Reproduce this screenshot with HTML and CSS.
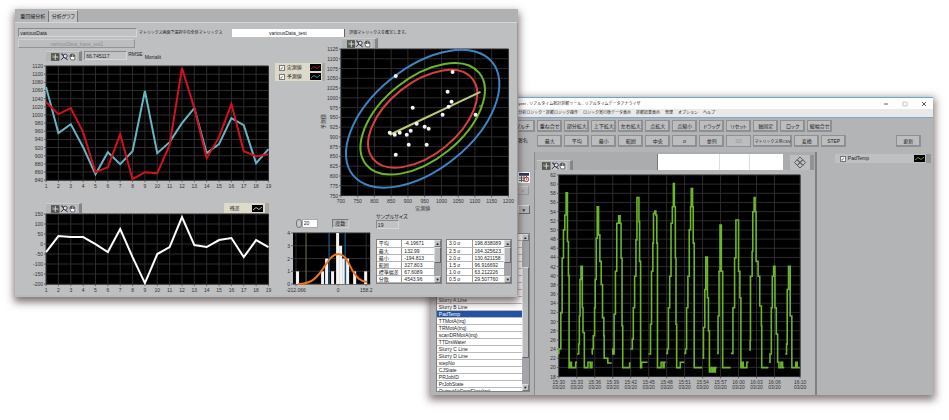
FILE: index.html
```html
<!DOCTYPE html>
<html lang="ja">
<head>
<meta charset="utf-8">
<title>リアルタイム統計診断ツール</title>
<link rel="stylesheet" href="styles.css">
</head>
<body>
<svg class="defs" aria-hidden="true">
  <symbol id="i-cross" viewBox="0 0 9 8"><rect width="9" height="8" fill="#555"/><path d="M4.500 1v6M1.500 4h6" stroke="#d5dccf" fill="none"/><rect x="1" y="2" width="2" height="2" fill="#5a9a4a"/></symbol>
  <symbol id="i-zoom" viewBox="0 0 9 8"><rect width="9" height="8" fill="#c4c4c6"/><path d="M1 7l3-3M1 1h2v2M5 5l3 2" stroke="#222" fill="none"/><circle cx="5.500" cy="3" r="2" fill="#dfe3f5" stroke="#33364f"/></symbol>
  <symbol id="i-hand" viewBox="0 0 9 8"><rect width="9" height="8" fill="#c4c4c6"/><path d="M2 7L1 4V2h1v2V1h1v3V1h2v3V2h1v3L6 7z" fill="#fff" stroke="#333" stroke-width=".7"/></symbol>
  <symbol id="i-wave" viewBox="0 0 11 7"><rect width="11" height="7" fill="#000"/><path d="M1 5L4 2.500 7 4.500 10 2" fill="none" stroke="currentColor" stroke-width=".8"/></symbol>
</svg>
<main class="desktop">
  <section class="window analyzer">
    <header class="titlebar">
      <span>yzer - リアルタイム統計診断ツール - リアルタイムデータアナライザ</span>
      <div class="caption">
        <button aria-label="最小化"><svg viewBox="0 0 6 6"><path d="M1 3h4"/></svg></button>
        <button aria-label="最大化" class="dim"><svg viewBox="0 0 6 6"><path d="M1 1h4v4H1z"/></svg></button>
        <button aria-label="閉じる"><svg viewBox="0 0 6 6"><path d="M1 1l4 4M5 1L1 5"/></svg></button>
      </div>
    </header>
    <nav class="menubar">
      <a href="#">分析ロジック・診断ロジック操作</a><a href="#">ロジック実行後データ表示</a><a href="#">診断結果表示</a><a href="#">管理</a><a href="#">オプション</a><a href="#">ヘルプ</a>
    </nav>
    <div class="tools">
      <div class="tool-row"><button>マルチ</button><button>重ね合せ</button><button>部分拡大</button><button>上下拡大</button><button>左右拡大</button><button>点拡大</button><button>点縮小</button><button>ドラッグ</button><button>リセット</button><button>軸固定</button><button>ロック</button><button>縦幅合せ</button></div>
      <div class="tool-row"><span class="tool-label">署名</span><button>最大</button><button>平均</button><button>最小</button><button>範囲</button><button>中央</button><button>σ</button><button>並列</button><button disabled>SD</button><button class="wide">マトリックス用CSV</button><button>変換</button><button>STEP</button><button class="update">更新</button></div>
    </div>
    <div class="analyzer-body">
      <aside class="side">
        <button class="cal" aria-label="期間"><svg viewBox="0 0 12 11"><path fill="#fff" d="M0 0h12v11H0z"/><path fill="#27306b" d="M1 1h10v2H1z"/><path d="M1 3.500h10M1 6h10M1 8.500h6M3.500 2v8M6 2v8M8.500 2v4" stroke="#444" stroke-width=".8"/><circle cx="8.500" cy="7.500" r="2.200" fill="#fff" stroke="#b33"/><path d="M8.500 6v2h1" stroke="#b33" stroke-width=".7" fill="none"/></svg></button>
        <button class="drop" disabled aria-label="選択肢 1">▼</button>
        <button class="drop lower" aria-label="選択肢 2">▼</button>
        <div class="listbox">
          <ul>
            <li></li><li></li><li></li><li></li><li></li><li></li><li></li><li></li><li></li>
            <li>Slurry A Line</li><li>Slurry B Line</li><li class="selected">PadTemp</li><li>TTMotA(trq)</li><li>TRMotA(trq)</li><li>scanDRMotA(trq)</li><li>TTDrsWater</li><li>Slurry C Line</li><li>Slurry D Line</li><li>stepNo</li><li>CJState</li><li>PRJobID</li><li>PrJobState</li><li>OutputAirDoorFlow(trq)</li>
          </ul>
          <div class="scroll"><b>▲</b><i class="long"></i><b>▼</b></div>
        </div>
      </aside>
      <div class="monitor">
        <div class="monitor-head">
          <div class="palette"><button aria-label="カーソル"><svg><use href="#i-cross"/></svg></button><button aria-label="ズーム"><svg><use href="#i-zoom"/></svg></button><button aria-label="パン"><svg><use href="#i-hand"/></svg></button></div>
          <div class="overview"><span></span><span></span><span></span></div>
          <button class="pad" aria-label="移動"><svg viewBox="0 0 14 14"><path d="M7 1l3 3-3 3-3-3zM7 7l3 3-3 3-3-3zM4 4l3 3-3 3-3-3zM10 4l3 3-3 3-3-3z"/></svg></button>
        </div>
        <svg id="temp" class="chart" viewBox="535 168 282 226" role="img" aria-label="PadTemp"></svg>
      </div>
      <div class="monitor-side">
        <label class="legend-bar"><input type="checkbox" checked><span>PadTemp</span><svg class="wave green"><use href="#i-wave"/></svg></label>
      </div>
    </div>
  </section>

  <section class="window report">
    <div class="tabs" role="tablist"><button role="tab">重回帰分析</button><button role="tab" class="active" aria-selected="true">分析グラフ</button></div>
    <div class="page">
      <div class="names">
        <input id="all" class="sunk" value="variousData"><label for="all">マトリックス画面で選択中の全体マトリックス</label>
        <input id="eval" class="white" value="variousData_test"><label for="eval">評価マトリックスを確定します。</label>
      </div>
      <div class="panels">
        <div class="p-main">
          <button class="base" disabled>variousData_base_set2</button>
          <div class="metrics">
            <div class="palette"><button aria-label="カーソル"><svg><use href="#i-cross"/></svg></button><button aria-label="ズーム"><svg><use href="#i-zoom"/></svg></button><button aria-label="パン"><svg><use href="#i-hand"/></svg></button></div>
            <input id="rmse" class="sunk" value="66.745117"><label for="rmse">RMSE</label><span class="unit">Mortalit</span>
          </div>
          <div class="with-legend">
            <svg id="fit" class="chart" viewBox="18 62 254 129" role="img" aria-label="実測値と予測値"></svg>
            <div class="legend">
              <label><input type="checkbox" checked><span>実測値</span><svg class="wave red"><use href="#i-wave"/></svg></label>
              <label><input type="checkbox" checked><span>予測値</span><svg class="wave teal"><use href="#i-wave"/></svg></label>
            </div>
          </div>
        </div>
        <div class="p-scatter">
          <div class="palette"><button aria-label="カーソル"><svg><use href="#i-cross"/></svg></button><button aria-label="ズーム"><svg><use href="#i-zoom"/></svg></button><button aria-label="パン"><svg><use href="#i-hand"/></svg></button></div>
          <svg id="scatter" class="chart" viewBox="318 48 194 164" role="img" aria-label="散布図"></svg>
        </div>
        <div class="p-resid">
          <div class="resid-head">
            <div class="palette"><button aria-label="カーソル"><svg><use href="#i-cross"/></svg></button><button aria-label="ズーム"><svg><use href="#i-zoom"/></svg></button><button aria-label="パン"><svg><use href="#i-hand"/></svg></button></div>
            <div class="legend-one"><span>残差</span><svg class="wave"><use href="#i-wave"/></svg></div>
          </div>
          <svg id="resid" class="chart" viewBox="18 213 267 82" role="img" aria-label="残差"></svg>
        </div>
        <div class="p-hist">
          <div class="hist-head"><span class="spin"></span><input class="num" value="20" aria-label="区間数"><button class="freq">度数</button></div>
          <svg id="hist" class="chart" viewBox="285 231 87 64" role="img" aria-label="度数分布"></svg>
        </div>
        <div class="p-stats">
          <label for="size">サンプルサイズ</label>
          <input id="size" class="sunk" value="19">
          <div class="tables">
            <div class="grid-box"><table><tr><th>平均</th><td>-4.19671</td></tr><tr><th>最大</th><td>132.99</td></tr><tr><th>最小</th><td>-194.813</td></tr><tr><th>範囲</th><td>327.803</td></tr><tr><th>標準偏差</th><td>67.6089</td></tr><tr><th>分散</th><td>4543.96</td></tr></table><div class="scroll"><b>▲</b><i></i><b>▼</b></div></div>
            <div class="grid-box"><table><tr><th>3.0 σ</th><td>198.838089</td></tr><tr><th>2.5 σ</th><td>164.325623</td></tr><tr><th>2.0 σ</th><td>130.621158</td></tr><tr><th>1.5 σ</th><td>96.916692</td></tr><tr><th>1.0 σ</th><td>63.212226</td></tr><tr><th>0.5 σ</th><td>29.507760</td></tr></table><div class="scroll"><b>▲</b><i></i><b>▼</b></div></div>
          </div>
        </div>
      </div>
    </div>
  </section>
</main>
<script src="app.js"></script>
</body>
</html>
```
FILE: styles.css
```css
* { box-sizing: border-box; }
body { margin: 0; background: #fff; color: #222; font: 5px/7px "Liberation Sans", "Noto Sans CJK JP", sans-serif; font-feature-settings: "palt"; }
button, input { font: inherit; color: inherit; margin: 0; padding: 0; min-width: 0; border-radius: 0; font-feature-settings: inherit; white-space: nowrap; }
a { color: inherit; text-decoration: none; }
label, span, a { white-space: nowrap; }
svg { display: block; }
.defs { width: 0; height: 0; position: absolute; }
.desktop { position: relative; min-height: 100vh; overflow: hidden; }
.window { position: absolute; background: #b3b4b6; }
.analyzer { left: 45.4%; right: 1.7%; top: 97px; border-top: 1px solid #6fa5d8; box-shadow: 0 3px 8px 2px rgba(70, 50, 50, .65); }
.report { left: 1.6%; width: 53%; top: 9px; background: #b9babc; box-shadow: 0 4px 8px 1px rgba(70, 50, 50, .7); padding-bottom: 2px; }

/* analyzer window */
.titlebar { display: flex; justify-content: space-between; height: 11px; padding-left: 17.4%; background: #fff; font-size: 4px; line-height: 11px; }
.titlebar, .menubar, .names { font-feature-settings: normal; }
.caption { display: flex; gap: 13px; padding-right: 6px; }
.caption button { width: 6px; border: 0; background: none; }
.caption path { fill: none; stroke: #333; stroke-width: .8; }
.caption .dim path { stroke: #bbb; }
.menubar { display: flex; gap: 5px; padding-left: 17.4%; background: #e9e9ea; border-bottom: 1px solid #7ba7d4; font-size: 4px; line-height: 8px; }
.tools { padding: 2px 12px 2px 15.8%; }
.tool-row { display: flex; gap: 2px; margin-bottom: 3px; }
.tool-row button, .tool-label { flex: 0 0 25px; height: 12px; line-height: 9px; }
.tool-label { line-height: 11px; text-align: center; }
.tool-row button { border: 1px solid; border-color: #d4d4d5 #68696c #68696c #d4d4d5; outline: 1px solid #8f9093; outline-offset: -1px; background: #bcbdbf; box-shadow: inset -1px -1px #8d8e91; }
.tool-row button:disabled { color: #96979a; box-shadow: none; }
.tool-row .wide { flex-basis: 39px; font-size: 4px; font-feature-settings: normal; }
.tool-row .update { margin-left: auto; }
.analyzer-body { display: grid; grid-template-columns: 104fr 282fr 116fr; }
.side { display: flex; flex-direction: column; align-items: flex-end; padding: 20px 4px 3px 5px; border-right: 1px solid #8a8b8e; }
.cal { width: 12px; height: 11px; border: 0; background: none; }
.drop { width: 12px; height: 9px; margin: 3px 1px 0 0; border: 1px solid; border-color: #ddd #666 #666 #ddd; background: #b4b5b7; line-height: 6px; color: #333; }
.drop:disabled { color: #97989a; border-color: #c9c9ca #98989a #98989a #c9c9ca; }
.drop.lower { margin: 10px 0 19px; }
.listbox { display: flex; width: 100%; height: 159px; border: 1px solid #818285; }
.listbox ul { flex: 1; margin: 0; padding: 0; list-style: none; overflow: hidden; background: #fff; }
.listbox li { height: 7px; padding-left: 2px; line-height: 6px; border-bottom: 1px solid #b9babc; white-space: nowrap; }
.listbox .selected { background: #2453a5; color: #fff; }
.scroll { display: flex; flex-direction: column; justify-content: space-between; width: 7px; background: #a3a4a7; }
.scroll b { height: 7px; background: #c1c2c4; border: 1px solid; border-color: #ddd #777 #777 #ddd; font-size: 4px; line-height: 5px; text-align: center; color: #111; }
.scroll i { height: 16px; margin-bottom: auto; background: #b9babc; border: 1px solid; border-color: #ddd #666 #666 #ddd; }
.scroll .long { height: 91px; margin-top: 26px; }
.monitor { border-right: 2px solid #808184; background: #b5b6b8; }
.monitor-head { display: flex; align-items: flex-end; height: 18px; padding: 0 1px 0 2px; background: #abacae; }
.palette { display: flex; width: 36px; height: 10px; padding: 1px 2px 1px 5px; background: #b3b4b6; border-right: 3px solid #85868a; border-top: 1px solid #cbcbcc; }
.palette button { flex: 1; border: 0; background: none; }
.palette svg { width: 100%; height: 8px; }
.overview { display: grid; grid-template-columns: 63fr 29fr 34fr; width: 126px; height: 16px; margin-left: auto; gap: 1px; background: #ddd; border-left: 1px solid #777; }
.overview span { background: #fff; }
.pad { width: 24px; height: 15px; margin-left: 7px; border: 0; border-right: 4px solid #929396; background: #bdbec0; }
.pad svg { width: 14px; height: 13px; margin: auto; }
.pad path { fill: none; stroke: #555; }
.monitor-side { padding: 2px 2px 0 18px; }
.legend-bar { display: flex; align-items: center; height: 9px; padding-left: 5px; background: #bfc0c2; border-right: 5px solid #95969a; }
.legend-bar span { margin-left: 2px; }
.legend-bar .wave { margin: 0 1px 0 auto; }
input[type=checkbox] { appearance: none; width: 6px; height: 6px; border: 1px solid #777; background: #fff; }
input[type=checkbox]:checked::before { content: "✓"; display: block; font: 5px/4px "DejaVu Sans", sans-serif; text-align: center; }
.wave { width: 11px; height: 7px; color: #ddd; }
.green { color: #8ab928; }
.red { color: #d8222a; }
.teal { color: #54aeb8; }

/* report window */
.tabs { display: flex; height: 13px; padding: 1px 0 0 2px; align-items: flex-end; background: #b0b1b3; }
.tabs button { width: 32px; height: 11px; border: 0; border-right: 1px solid #77787b; background: #b3b4b6; line-height: 9px; }
.tabs .active { width: 29px; height: 12px; background: #c2c3c5; border-top: 1px solid #ddd; }
.page { padding: 4px 5px 0 3px; border-top: 1px solid #d5d5d6; border-right: 1px solid #98999b; background: #bebfc1; }
.names { display: flex; align-items: center; height: 11px; font-size: 4px; }
.names input { font-size: 5px; }
.sunk { border: 1px solid; border-color: #88898c #d6d6d7 #d6d6d7 #88898c; background: #c1c2c4; height: 9px; padding-left: 1px; }
.names .sunk { width: 24%; margin-right: 2px; }
.names .white { width: 23%; height: 8px; margin: 0 4px 0 auto; text-align: center; border: 0; border-right: 1px solid #666; background: #fff; }
.names label:last-child { flex: 0 0 33%; }
.panels { display: grid; grid-template-columns: 267fr 33fr 54fr 139fr; grid-template-rows: 165px 9px auto; }
.chart { width: 100%; overflow: visible; }
.p-main { grid-area: 1 / 1 / 2 / 3; }
.base { display: block; width: 117px; height: 9px; margin-top: 1px; border: 1px solid; border-color: #cfcfd0 #929396 #929396 #cfcfd0; background: #bcbdbf; color: #909194; line-height: 6px; }
.metrics { display: flex; height: 14px; padding: 3px 0 0 28px; line-height: 7px; }
.metrics .sunk { width: 43px; margin-left: 2px; }
.metrics label { margin-left: 1px; }
.unit { margin: 3px 0 0 2px; }
.with-legend { display: grid; grid-template-columns: 254fr 50fr; gap: 2px; margin-right: -6px; }
.legend { align-self: start; margin-top: 1px; padding: 0 1px 0 4px; background: #dedac9; border-right: 3px solid #aaa99f; }
.legend label { display: flex; align-items: center; height: 9px; gap: 2px; }
.legend .wave { margin-left: auto; }
.p-scatter { grid-area: 1 / 3 / 3 / 5; }
.p-scatter .palette { margin-left: 23px; }
.p-resid { grid-area: 2 / 1 / 4 / 2; }
.resid-head { display: flex; justify-content: space-between; padding: 0 17px 0 28px; }
.legend-one { display: flex; align-items: center; justify-content: space-between; width: 45px; padding: 0 2px 0 6px; background: #dedac9; border-right: 4px solid #aaa99f; }
.p-hist { grid-area: 3 / 2 / 4 / 4; }
.hist-head { display: flex; height: 19px; padding: 7px 0 3px 10px; }
.spin { width: 6px; border-radius: 3px; border: 1px solid #777; background: #c5c5c6; }
.num { width: 16px; border: 1px solid #aaa; background: #fff; padding-left: 1px; }
.freq { width: 17px; margin-left: 14px; border: 1px solid; border-color: #777 #d0d0d0 #d0d0d0 #777; background: #b5b6b8; line-height: 7px; }
.p-stats { grid-area: 3 / 4 / 4 / 5; padding-left: 3px; }
.p-stats label { display: block; line-height: 8px; }
.p-stats .sunk { display: block; width: 23px; }
.tables { display: grid; grid-template-columns: 1fr 1fr; gap: 4px; margin-top: 10px; }
.grid-box { display: flex; border: 1px solid #808184; background: #fff; }
.grid-box table { flex: 1; border-collapse: collapse; table-layout: fixed; width: 0; }
.grid-box th, .grid-box td { height: 7px; padding: 0 0 0 2px; border-bottom: 1px solid #b3b4b6; font-weight: normal; text-align: left; line-height: 6px; white-space: nowrap; }
.grid-box th { width: 25px; border-right: 1px solid #999; }

/* charts */
.chart text { font-size: 5px; fill: #333; }
.chart .mark { fill: #6db52a; }
.plot { fill: #000; }
.grid { stroke: #2c2c2e; fill: none; }
.tick { stroke: #444; stroke-width: .7; fill: none; }
.line { fill: none; stroke-width: 2; stroke-linejoin: miter; }
.s-red { stroke: #d01220; }
.s-teal { stroke: #67b5c3; }
.s-white { stroke: #fff; }
.s-green { stroke: #6db52a; }
.s-thin { stroke-width: 1.6; }
.s-blue { stroke: #3c86c6; }
.s-ring-red { stroke: #d6413e; }
.s-pale { stroke: #bacd72; }
.s-orange { stroke: #e87520; }
.bar, .dot { fill: #f4f4f4; }
.end { text-anchor: end; }
.mid { text-anchor: middle; }
```
FILE: app.js
```js
const NS = 'http://www.w3.org/2000/svg';

function add(parent, tag, attrs, text) {
  const node = document.createElementNS(NS, tag);
  for (const key in attrs) node.setAttribute(key, attrs[key]);
  if (text !== undefined) node.textContent = text;
  parent.appendChild(node);
  return node;
}

function range(from, to, step) {
  const out = [];
  for (let v = from; step > 0 ? v <= to : v >= to; v += step) out.push(v);
  return out;
}

// Draws the black plot area, its grid, and both label scales.
function frame(id, x, y, w, h, xs, ys, xPos) {
  const svg = document.getElementById(id);
  const px = xPos || xs.map((_, i) => x + w * i / (xs.length - 1));
  const py = ys.map((_, i) => y + h * i / (ys.length - 1));
  add(svg, 'rect', { class: 'plot', x, y, width: w, height: h });
  add(svg, 'path', { class: 'grid', d: px.map(p => `M${p} ${y}v${h}`).join('') + py.map(p => `M${x} ${p}h${w}`).join('') });
  add(svg, 'path', { class: 'tick', d: px.map(p => `M${p} ${y + h}v2`).join('') + py.map(p => `M${x - 2} ${p}h2`).join('') });
  ys.forEach((v, i) => add(svg, 'text', { class: 'end', x: x - 3, y: py[i] + 2 }, v));
  xs.forEach((v, i) => add(svg, 'text', { class: 'mid', x: px[i], y: y + h + 8 }, v));
  return svg;
}

function series(svg, x, w, ys, cls) {
  const points = ys.map((v, i) => `${x + w * i / (ys.length - 1)},${v}`).join(' ');
  add(svg, 'polyline', { class: 'line ' + cls, points });
}

const fit = frame('fit', 46, 66, 222, 114, range(1, 19, 1), range(1120, 840, -20));
series(fit, 46, 222, [87, 133, 124, 147, 174, 152, 164, 151, 91, 153, 142, 123, 108, 153, 144, 118, 125, 163, 149], 's-teal');
series(fit, 46, 222, [102, 114, 108, 132, 172, 167, 134, 179, 172, 173, 145, 68, 108, 158, 137, 104, 151, 156, 154], 's-red');

const resid = frame('resid', 46, 214, 222, 70, range(1, 19, 1), range(150, -200, -50));
series(resid, 46, 222, [252, 236, 237, 237, 244, 252, 229, 257, 283, 254, 247, 217, 245, 247, 240, 238, 257, 240, 247], 's-white');

const scatter = frame('scatter', 340, 49, 168, 147, range(700, 1200, 50), range(1125, 750, -25));
[[90, 51, 's-blue'], [73, 41, 's-green'], [64, 36, 's-ring-red']].forEach(([rx, ry, cls]) =>
  add(scatter, 'ellipse', { class: 'line ' + cls, cx: 0, cy: 0, rx, ry, transform: 'translate(422 119) rotate(-39)' }));
add(scatter, 'path', { class: 'line s-pale', d: 'M389 135L480 92' });
[[395, 76], [452, 72], [447, 92], [451, 102], [448, 107], [442, 115], [475, 115], [412, 108], [416, 124], [424, 127], [428, 129],
 [389, 133], [394, 135], [399, 133], [406, 135], [410, 131], [408, 145], [426, 145], [395, 155]].forEach(([cx, cy]) =>
  add(scatter, 'circle', { class: 'dot', cx, cy, r: 2 }));
add(scatter, 'text', { class: 'mark', x: 478, y: 108 }, '×');
add(scatter, 'text', { class: 'mid', x: 422, y: 211 }, '実測値');
add(scatter, 'text', { class: 'mid', transform: 'translate(324 122) rotate(-90)' }, '予測値');

const hist = frame('hist', 292, 233, 77, 51, ['-212.066', '0', '158.2'], [4, 3, 2, 1, 0], [295, 337, 365]);
[[295, 1], [320, 1], [324, 2], [330, 1], [335, 4], [338, 3], [341, 2], [345, 2], [352, 1], [363, 1]].forEach(([x, n]) =>
  add(hist, 'rect', { class: 'bar', x, y: 284 - n * 51 / 4, width: 3, height: n * 51 / 4 }));
[[305, '#737745'], [328, '#2574ad'], [344, '#2574ad']].forEach(([x, stroke]) => add(hist, 'path', { d: `M${x} 233v51`, stroke }));
add(hist, 'path', { class: 'line s-orange', d: 'M297 284C309 283 313 281 321 270C327 261 331 254 337 254C344 254 347 262 351 270C356 278 359 281 366 282' });

const times = ['15:30', '15:33', '15:36', '15:39', '15:42', '15:45', '15:48', '15:51', '15:54', '15:57', '16:00', '16:03', '16:06', '16:10'];
const timeX = times.map((_, i) => i < 13 ? 559 + 18.1 * i : 802);
const temp = frame('temp', 559, 173, 243, 203, times, range(62, 18, -2), timeX);
timeX.forEach(x => add(temp, 'text', { class: 'mid', x, y: 389 }, '03/20'));

// One run per process cycle, in thirds of a chart unit.
const runs = [
  '55,578 57,565 63,455 67,290 71,205 75,160 79,93 83,240 86,343 88,621 90,605 95,621 108,605 112,605',
  '112,580 117,550 119,465 121,355 124,315 128,440 130,515 134,550 134,621 145,605 152,621 157,605 160,605',
  '156,580 158,565 161,525 165,440 167,355 170,230 173,135 177,220 181,300 185,370 189,470 193,525 194,593 205,607 217,607',
  '218,565 220,580 224,460 228,330 232,185 238,162 242,185 245,290 248,495 250,621 271,605',
  '273,565 279,535 282,440 286,345 290,235 293,107 299,180 301,300 304,430 304,621 307,605 325,605',
  '328,580 334,490 337,330 341,245 343,155 347,148 350,160 353,245 355,330 355,621 366,605 372,621 375,605 380,605',
  '381,578 385,565 388,440 392,345 396,185 400,135 403,65 406,135 409,290 411,490 413,621 424,605 436,605',
  '436,578 440,565 443,440 447,345 451,205 455,135 457,80 461,135 463,245 466,440 466,621 490,621',
  '491,593 494,500 498,385 501,287 506,410 509,510 512,550 512,634 517,621 522,634 524,621 528,634 530,621 534,621',
  '535,578 538,465 541,330 544,190 548,330 552,440 552,621 576,621',
  '577,578 583,440 588,290 592,175 600,330 604,410 607,621 610,605 614,621 625,605 630,605',
  '632,568 635,540 636,345 641,270 643,150 647,107 650,150 653,300 659,345 664,435 669,495 670,621 690,621',
  '692,605 695,580 699,440 702,345 706,315 710,440 714,520 718,550 718,605 722,621 728,605 733,621 738,621',
  '741,580 745,550 747,385 751,315 756,465 761,525 761,621 773,605 777,621 785,621'
];
runs.forEach(run => {
  const d = run.split(' ').map((pair, i) => {
    const [x, y] = pair.split(',').map(Number);
    const px = 540 + x / 3, py = 160 + y / 3;
    return i ? `H${px}V${py}` : `M${px} ${py}`;
  }).join('');
  add(temp, 'path', { class: 'line s-green s-thin', d });
});
```
